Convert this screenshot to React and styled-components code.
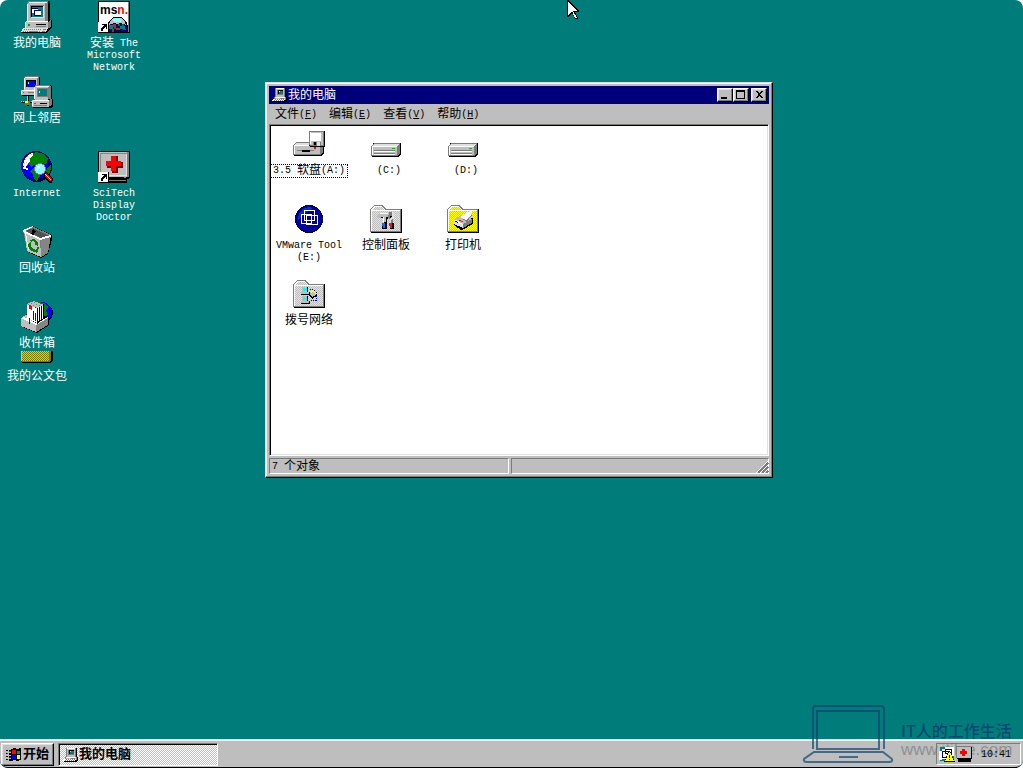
import React from "react";
import styled, { createGlobalStyle, css } from "styled-components";

const c = {
  teal: "#007d7b",
  face: "#bdbebd",
  light: "#dedfde",
  shade: "#7b7d7b",
  navy: "#00007b",
};

const Global = createGlobalStyle`
  *, *::before, *::after { box-sizing: border-box; }
  html, body { margin: 0; height: 100%; background: #fff; }
  #root { height: 100%; }
  body, button {
    font-family: "Liberation Mono", "Noto Sans CJK SC", monospace;
    font-size: 12px;
    line-height: 12px;
    color: #000;
  }
  button { margin: 0; padding: 0; border: 0; background: none; text-align: center; }
`;

const raised = css`
  border: 1px solid;
  border-color: #fff #000 #000 #fff;
  box-shadow: inset -1px -1px ${c.shade}, inset 1px 1px ${c.light};
`;

/* ---------- text ---------- */

const Latin = styled.span`
  font-size: 10px;
  line-height: 0;
  vertical-align: 1px;
  white-space: pre;
`;

/* Latin runs are set smaller, so that one letter is half an ideograph wide. */
function Mixed({ children }) {
  return children
    .split(/([\x20-\x7e]+)/)
    .filter(Boolean)
    .map((run, i) => (/[\x20-\x7e]/.test(run) ? <Latin key={i}>{run}</Latin> : run));
}

/* ---------- icons ---------- */

const Svg = styled.svg`
  display: block;
  flex: none;
  overflow: visible;
`;

function Pixels({ w = 32, h = 32, shapes, children }) {
  return (
    <Svg width={w} height={h} viewBox={`0 0 ${w} ${h}`} shapeRendering="crispEdges" aria-hidden="true">
      {shapes && shapes.map(([fill, d], i) => <path key={i} fill={fill} d={d} />)}
      {children}
    </Svg>
  );
}

const Computer = () => (
  <Pixels
    shapes={[
      ["#000", "M8 0h20l1 1v19l-2 2H7V2z"],
      [c.shade, "M7 0h20v20H6V2z"],
      [c.face, "M8 1h16v20H6V3z"],
      ["#fff", "M8 1h18v1H8zM6 3h1v17H6z"],
      [c.face, "M8 3h16v16H8z"],
      [c.shade, "M9 4h14v1H9zM9 4h1v13H9z"],
      ["#000", "M10 5h12v1H10zM10 5h1v11h-1z"],
      [c.light, "M22 5h1v12H10v-1h12z"],
      [c.teal, "M11 6h11v10H11z"],
      ["#fff", "M11 8h6v4h-6z"],
      [c.navy, "M11 7h6v1h-6zM13 9h7v6h-7z"],
      ["#fff", "M14 10h6v4h-6z"],
      ["#000", "M5 20h24l2-1v8l-3 2H5z"],
      [c.shade, "M27 21l3-2v7l-3 2z"],
      [c.face, "M4 21h23v7H4z"],
      ["#fff", "M5 20h22v1H5zM4 21h1v6H4z"],
      ["#00a200", "M7 23h2v2H7z"],
      ["#000", "M15 23h10v1H15z"],
      [c.shade, "M15 25h10v1H15z"],
      ["#000", "M2 27h26l1 1-3 4H0v-1z"],
      [c.light, "M2 27h25l-2 4H0z"],
      [c.shade, "M3 28h1v1H3zM5 28h1v1H5zM7 28h1v1H7zM9 28h1v1H9zM11 28h1v1h-1zM13 28h1v1h-1zM15 28h1v1h-1zM17 28h1v1h-1zM19 28h1v1h-1zM22 28h3v1h-3zM2 30h1v1H2zM4 30h1v1H4zM6 30h1v1H6zM8 30h9v1H8zM18 30h1v1h-1zM21 30h3v1h-3z"],
    ]}
  />
);

const Network = () => (
  <Pixels
    shapes={[
      ["#000", "M4 0h13l2 1v14H3V1z"],
      [c.shade, "M4 0h13l1 1v13H3V1z"],
      [c.face, "M4 1h12v13H3V2z"],
      ["#fff", "M4 1h13v1H4zM3 2h1v11H3z"],
      ["#000", "M5 4h10v7H5z"],
      ["#0000ff", "M6 5h8v6H6z"],
      ["#84ffff", "M7 6h1v2H7z"],
      ["#000", "M1 14h18v6H1z"],
      [c.face, "M0 14h16v5H0z"],
      ["#fff", "M1 14h16v1H1zM0 15h1v3H0z"],
      ["#00a200", "M2 16h1v1H2z"],
      [c.shade, "M7 16h7v1H7z"],
      ["#000", "M6 20h2v5H6zM0 26h4v1H0zM9 26h3v1H9zM6 28h2v2H6z"],
      [c.face, "M6 20h1v5H6zM0 25h1v1H0zM2 25h1v1H2zM10 25h1v1h-1z"],
      ["#7b7d00", "M4 25h5v4H4z"],
      ["#ffff00", "M4 25h3v2H4z"],
      ["#000", "M15 9h14l2 1v14H14V10z"],
      [c.shade, "M14 9h14l2 1v13H14z"],
      [c.face, "M14 10h13v14H14z"],
      ["#fff", "M15 10h13v1H15zM13 11h1v12h-1z"],
      [c.shade, "M16 12h11v9H16z"],
      [c.teal, "M17 13h9v7h-9z"],
      ["#84ffff", "M18 15h1v2h-1z"],
      ["#000", "M12 24h18l2-1v7l-2 2H12z"],
      [c.shade, "M27 24l4-1v6l-4 2z"],
      [c.face, "M11 24h17v7H11z"],
      ["#fff", "M12 24h16v1H12zM11 25h1v5h-1z"],
      ["#00a200", "M13 27h2v1h-2z"],
      ["#000", "M19 27h7v1h-7z"],
      [c.shade, "M13 29h13v1H13z"],
    ]}
  />
);

const Internet = () => (
  <Pixels>
    <circle cx="16" cy="16" r="15" fill="#000" />
    <circle cx="15" cy="15" r="15" fill={c.navy} />
    <circle cx="14" cy="15" r="13" fill="#0000ff" />
    <path fill="#008200" d="M10 4l5-3 8 2 4 5-2 5-5-1-3 4-4-2-3 2-3-4zM12 17l5 2 3 4-4 7-3-2-1-4-3-4zM26 17l4-3v4l-2 5-3-2z" />
    <path fill="#fff" d="M4 8l4-5 4-1v2L9 7v3l-3 5-3 1-1-2zM2 16h3v2H2zM5 17h2v2H5z" />
    <path fill={c.face} d="M8 3h1v1H8zM10 3h1v1h-1zM6 5h1v1H6zM8 7h1v1H8zM4 8h1v1H4zM5 11h1v1H5zM3 12h1v1H3zM6 13h1v1H6z" />
    <path fill="#000" d="M23 22l3-1 6 7-1 4h-3l-5-6z" />
    <path fill="#ff0000" d="M24 23l2-1 5 6-2 3-5-6z" />
    <path fill="#fff" d="M24 23h1l5 6h-1z" />
    <circle cx="19" cy="18" r="6" fill={c.shade} />
    <circle cx="19" cy="18" r="5" fill="#84ffff" />
    <path fill="#fff" d="M16 15h3v2h-2v3h-1zM20 20h2v1h-2zM19 14h1v1h-1zM21 17h1v1h-1z" />
  </Pixels>
);

const RecycleBin = () => (
  <Pixels
    shapes={[
      ["#000", "M12 0l19 9v4l-4 15-7 4-13-6L3 5z"],
      [c.shade, "M11 0l19 9-3 18-7 4L6 25 2 4z"],
      ["#525152", "M5 5l7-3 16 8-8 2z"],
      ["#000", "M12 3l3 2-3 5-2-2z"],
      [c.face, "M3 5l16 8 1 18L6 25z"],
      ["#848684", "M20 13l10-3-4 17-6 4z"],
      ["#fff", "M2 4l10-4v1L4 5l15 7 11-3v2l-11 3L2 6zM4 7h1l3 17H7z"],
      ["#008200", "M9 14l4-1 3 3 1-1v5l-4-2 1-1-2-2-2 1zM7 18l3-2v4l2 3-1 2-3-2zM12 23l3 1 2-4 1 2-2 5-3-1v1l-2-3z"],
    ]}
  />
);

const Inbox = () => (
  <Pixels>
    <circle cx="22" cy="12" r="10" fill="#000" />
    <circle cx="21" cy="11" r="10" fill="#0000ff" />
    <path fill="#008200" d="M17 1l6 1 4 4-2 4 2 4-4 1-3-6z" />
    <path fill="#000" d="M0 17l6-4 22 3v8l-12 8-3-1L0 25z" />
    <path fill={c.face} d="M0 17l5-3 10 9v8L0 25z" />
    <path fill="#848684" d="M15 24l12-7v7l-12 7z" />
    <path fill="#fff" d="M0 17l15 7 12-7v-1l-12 6L3 16z" />
    <path fill="#000" d="M15 6l8-3v15l-7 5z" />
    <path fill={c.face} d="M5 4l5-3 3-1 10 4-6 3z" />
    <path fill="#fff" d="M6 4l10 3v15l-8-4-2 3zM17 6h1v14h-1zM19 5h1v14h-1zM21 5h1v13h-1z" />
    <path fill={c.shade} d="M7 3h1v1H7zM10 2h1v1h-1zM13 1h1v1h-1zM12 4h1v1h-1zM15 3h1v1h-1zM18 4h1v1h-1z" />
    <path fill="#ff0000" d="M8 4l3 1v4l-3-1z" />
    <path fill="#0000ff" d="M12 10h1v9h-1zM14 12h1v8h-1zM8 17h1v6H8z" />
  </Pixels>
);

const Briefcase = () => (
  <Pixels h={15}>
    <defs>
      <pattern id="gold" width="2" height="2" patternUnits="userSpaceOnUse">
        <rect width="2" height="2" fill="#7b7d00" />
        <path fill={c.face} d="M1 0h1v1H1zM0 1h1v1H0z" />
      </pattern>
    </defs>
    <path fill="#000" d="M0 0h32v9l-3 3H1z" />
    <path fill="#7b7d00" d="M0 0h30v9l-2 2H1z" />
    <path fill="url(#gold)" d="M1 0h27v10H1z" />
    <path fill="#cecf63" d="M0 0h1v10H0z" />
  </Pixels>
);

const ShortcutMark = () => (
  <>
    <path fill="#000" d="M0 21h11v11H0z" />
    <path fill="#fff" d="M0 21h10v10H0z" />
    <path fill="#000" d="M4 23h5v5H8v-2H7v1H6v1H5v2H3v-3h1v-1h1v-1h1v-1H4z" />
  </>
);

const MsnText = styled.text`
  font: bold 12px/12px "Liberation Sans", sans-serif;
`;

const Msn = () => (
  <Pixels>
    <path fill="#000" d="M0 0h32v32H0z" />
    <path fill={c.shade} d="M30 1h1v30h-1z" />
    <path fill="#fff" d="M1 1h29v30H1z" />
    <MsnText x="2" y="13">
      ms<tspan fill="#ff0000">n.</tspan>
    </MsnText>
    <path fill="#000" d="M8 31v-5l3-6 5-4h7l5 4 2 5v6z" />
    <path fill={c.navy} d="M9 31v-5l3-5 4-4h7l4 4 2 4v6z" />
    <path fill={c.face} d="M12 20l4-3h7l4 4 1 3-5-2-4 1-3-1-5 2z" />
    <path fill="#84ffff" d="M14 18l3-1h4l3 2-2 2h-6z" />
    <path fill="#008284" d="M11 24h4v4h-4zM22 25h5v3h-5z" />
    <path fill="#c62010" d="M15 23h3v3h-3zM18 27h4v2h-4zM14 28h2v3h-2zM25 28h3v1h-3z" />
    <path fill="#008200" d="M16 26h2v2h-2zM20 23h2v2h-2zM24 23h2v2h-2z" />
    <ShortcutMark />
  </Pixels>
);

const SciTech = () => (
  <Pixels>
    <path fill="#000" d="M0 0h32v26l-2 2H0z" />
    <path fill={c.shade} d="M1 1h30v24l-2 2H1z" />
    <path fill={c.face} d="M1 1h28v25H1z" />
    <path fill="#848684" d="M2 2h27v1H3v22H2z" />
    <path fill={c.light} d="M28 3h1v22H3v-1h25z" />
    <path fill="#7b0000" d="M14 5h6v6h5v6h-5v5h-6v-5H9v-6h5z" />
    <path fill="#ff0000" d="M13 5h5v5h5v5h-5v5h-5v-5H8v-5h5z" />
    <path fill="#000" d="M8 26h23v1H8zM11 28h18v4H11z" />
    <path fill="#00ff00" d="M26 26h2v1h-2z" />
    <path fill={c.shade} d="M11 29h17v1H11z" />
    <ShortcutMark />
  </Pixels>
);

const Floppy = () => (
  <Pixels
    shapes={[
      ["#000", "M3 14h28v11l-3 3H1V18z"],
      [c.shade, "M0 17l3-3h27v10l-3 3H0z"],
      [c.light, "M1 17l3-2h24l-2 3H1z"],
      [c.face, "M1 18h26v8H1z"],
      ["#fff", "M1 17h25v1H1zM1 18h1v8H1z"],
      ["#000", "M9 22h8v2H9z"],
      [c.shade, "M4 22h5v1H4zM17 22h4v1h-4z"],
      ["#000", "M17 3h15v16H18l-2-1V4z"],
      [c.shade, "M16 3h15v15H17l-1-1z"],
      [c.face, "M17 4h13v13H17z"],
      ["#fff", "M18 5h10v8H18zM17 4h1v12h-1z"],
      [c.shade, "M20 14h8v4h-8z"],
      ["#000", "M21 14h2v3h-2z"],
      [c.light, "M24 14h3v4h-3z"],
      ["#ff0000", "M21 19h2v2h-2z"],
    ]}
  />
);

const HardDisk = () => (
  <Pixels
    shapes={[
      ["#000", "M3 15h28v11l-3 3H2z"],
      [c.shade, "M1 18l3-3h26v10l-3 3H1z"],
      [c.light, "M2 18l3-2h24l-2 2z"],
      [c.face, "M2 18h25v9H2z"],
      ["#fff", "M2 18h25v1H2zM2 19h1v8H2z"],
      [c.shade, "M4 22h21v1H4zM4 25h21v1H4z"],
      ["#fff", "M4 23h21v1H4zM4 26h21v1H4z"],
      ["#00c300", "M22 20h3v1h-3z"],
    ]}
  />
);

const VmwareDisc = () => (
  <Pixels>
    <circle cx="16" cy="16" r="14" fill="#000042" />
    <circle cx="16" cy="16" r="13" fill="#00009c" />
    <path fill="#0030ce" d="M6 10l5-5 5-1 4 1-6 4-6 5-3 3z" />
    <g fill="none" stroke="#fff">
      <path d="M8.500 11.500h10v9h-10zM11.500 7.500h10v10h-10zM13.500 12.500h11v9h-11z" />
    </g>
  </Pixels>
);

function Folder({ children }) {
  return (
    <Pixels>
      <defs>
        <pattern id="folder" width="2" height="2" patternUnits="userSpaceOnUse">
          <rect width="2" height="2" fill={c.face} />
          <path fill="#ffff00" d="M0 0h1v1H0zM1 1h1v1H1z" />
        </pattern>
      </defs>
      <path fill="#000" d="M1 6h31v24H1z" />
      <path fill={c.shade} d="M0 6l4-4h9l3 4h15v23H0z" />
      <path fill="#fff" d="M1 7l3-4h8l3 4h15v21H1z" />
      <path fill="url(#folder)" d="M3 6l2-2h7l2 3H3zM2 8h28v20H2z" />
      {children}
    </Pixels>
  );
}

const ControlPanel = () => (
  <Folder>
    <path fill="#000" d="M7 14l4-3h10l1 3-5 2v4h-3v-5H8z" />
    <path fill={c.face} d="M6 13l5-3h9v3l-4 1v5h-3v-5l-5 1z" />
    <path fill="#fff" d="M10 10h8v1h-8zM13 14h1v5h-1z" />
    <path fill={c.shade} d="M19 9h3v4h-2v3h3v8h-3v-7l-2-2z" />
    <path fill={c.light} d="M22 8l2 2v5l-3 2v4h-1v-6h2z" />
    <path fill="#000" d="M12 20h5v6h-5zM20 20h4v6h-4z" />
    <path fill="#0071ff" d="M12 20h3v5h-2z" />
    <path fill="#ff0042" d="M19 20h3v5h-2z" />
  </Folder>
);

const Printers = () => (
  <Folder>
    <path fill="#000" d="M7 18l7-5 12 2v6l-9 5-3 1-7-5z" />
    <path fill={c.face} d="M7 17l7-5 11 4-9 5z" />
    <path fill={c.shade} d="M16 21l9-5v4l-9 5z" />
    <path fill={c.light} d="M7 18l9 4v3l-9-4z" />
    <path fill="#fff" d="M13 14l7-5 5-1-1 4-5 5zM7 17h2l7 4v1z" />
    <path fill={c.shade} d="M14 15l5 2 5-5h1l-5 7z" />
    <path fill="#ff0000" d="M12 17h2v1h-2z" />
    <path fill="#00a200" d="M14 18h2v1h-2z" />
  </Folder>
);

const DialUp = () => (
  <Folder>
    {[9, 18].map((y) => (
      <g key={y} transform={`translate(8 ${y})`}>
        <path fill="#000" d="M1 0h6v5h2v3H0V6h1z" />
        <path fill={c.face} d="M1 0h5v5H1zM0 5h8v2H0z" />
        <path fill="#00ffff" d="M2 1h4v3H2z" />
      </g>
    ))}
    <path fill="none" stroke="#0000ff" strokeDasharray="1 1" d="M17 11.500h4v3M17.500 22.500h6v-5" />
    <path fill="#000" d="M16 17l4-4 4 1v4l-5 3z" />
    <path fill={c.face} d="M16 16l4-2 3 3-4 2z" />
    <path fill="#ffff00" d="M18 12l4 1 2 3h-2l-2-2-2 1z" />
  </Folder>
);

const SmallComputer = () => (
  <Pixels
    w={16}
    h={16}
    shapes={[
      ["#000", "M4 1h10v9h1v4l-2 1H1v-1l1-3h2z"],
      [c.shade, "M3 1h10v9H3zM2 10h12v3H2z"],
      [c.face, "M4 1h8v9H4z"],
      ["#fff", "M4 1h8v1H4z"],
      [c.shade, "M5 3h6v5H5z"],
      ["#000", "M6 3h5v1H6zM6 3h1v4H6z"],
      [c.teal, "M7 4h4v3H7z"],
      ["#84ffff", "M7 4h1v1H7z"],
      [c.face, "M3 10h10v2H3z"],
      ["#fff", "M3 10h10v1H3zM1 12h12l-1 2H0z"],
      [c.shade, "M8 11h4v1H8zM3 12h1v1H3zM5 12h1v1H5zM7 12h1v1H7zM9 12h1v1H9zM11 12h1v1h-1zM2 13h1v1H2zM4 13h1v1H4zM6 13h1v1H6zM8 13h1v1H8zM10 13h1v1h-1z"],
    ]}
  />
);

const Flag = () => (
  <Pixels
    w={16}
    h={16}
    shapes={[
      ["#000", "M5 2l3-1 3 1 4-1v12l-4 1-3-1-3 1zM0 3h2v1H0zM3 3h2v2H3zM0 6h2v1H0zM3 6h2v2H3zM0 9h2v1H0zM3 9h2v2H3zM0 12h2v1H0zM3 12h2v2H3z"],
      ["#ff0000", "M6 3h4v4H6zM3 4h2v1H3zM1 6h1v1H1z"],
      ["#00a200", "M11 4h3v3h-3z"],
      ["#0000ff", "M6 8h4v4H6zM3 10h2v1H3zM1 12h1v1H1z"],
      ["#ffff00", "M11 8h3v4h-3z"],
    ]}
  />
);

const TrayVmware = () => (
  <Pixels
    w={16}
    h={16}
    shapes={[
      [c.teal, "M1 1h14v14H1z"],
      ["#fff", "M3 3h3V1h9v9h-2v3H3v1H0V5h3z"],
      [c.navy, "M3 5h7v1H4v5h6v1H3zM6 3h7v7h-1V4H7v3h4v1H6z"],
      ["#000", "M10 5h1l5 11H5z"],
      ["#ffff00", "M10 6h1l4 9H6z"],
      ["#000", "M10 9h1v3h-1zM10 13h1v1h-1z"],
    ]}
  />
);

const TrayDoctor = () => (
  <Pixels
    w={16}
    h={16}
    shapes={[
      ["#000", "M1 1h15v12h-1v3H2v-3H1z"],
      [c.face, "M0 0h15v12H0z"],
      [c.shade, "M0 0h15v1H1v11H0z"],
      ["#ff0000", "M6 3h3v2h2v3H9v2H6V8H4V5h2z"],
    ]}
  />
);

const ButtonGlyph = ({ d }) => (
  <Pixels w={12} h={10}>
    <path d={d} fill="#000" />
  </Pixels>
);

/* ---------- desktop ---------- */

const Screen = styled.main`
  position: relative;
  display: flex;
  flex-direction: column;
  min-height: 100%;
  overflow: hidden;
  border-bottom: 1px solid #000;
  border-radius: 8px;
  background: ${c.teal};
`;

const Desktop = styled.section`
  flex: 1;
  display: grid;
  grid-template-columns: 74px 74px;
  grid-template-rows: repeat(4, 75px) 50px auto;
  column-gap: 3px;
  align-items: start;
  align-content: start;
  padding-top: 1px;
`;

const Shortcut = styled.button`
  grid-column: ${(p) => p.$col};
  grid-row: ${(p) => p.$row};
  display: flex;
  flex-direction: column;
  align-items: center;
  gap: 5px;
  color: ${(p) => (p.$dark ? "#000" : "#fff")};
`;

const Caption = styled.span`
  width: 100%;
  white-space: nowrap;
  outline: ${(p) => (p.$focused ? "1px dotted #000" : "none")};
`;

const shortcuts = [
  { name: ["我的电脑"], Icon: Computer, col: 1, row: 1 },
  { name: ["网上邻居"], Icon: Network, col: 1, row: 2 },
  { name: ["Internet"], Icon: Internet, col: 1, row: 3 },
  { name: ["回收站"], Icon: RecycleBin, col: 1, row: 4 },
  { name: ["收件箱"], Icon: Inbox, col: 1, row: 5 },
  { name: ["我的公文包"], Icon: Briefcase, col: 1, row: 6 },
  { name: ["安装 The", "Microsoft", "Network"], Icon: Msn, col: 2, row: 1 },
  { name: ["SciTech", "Display", "Doctor"], Icon: SciTech, col: 2, row: 3 },
];

const drives = [
  { name: ["3.5 软盘(A:)"], Icon: Floppy, focused: true },
  { name: [" (C:)"], Icon: HardDisk },
  { name: [" (D:)"], Icon: HardDisk },
  { name: ["VMware Tool", "(E:)"], Icon: VmwareDisc },
  { name: ["控制面板"], Icon: ControlPanel },
  { name: ["打印机"], Icon: Printers },
  { name: ["拨号网络"], Icon: DialUp },
];

function Lines({ of }) {
  return of.map((line, i) => (
    <React.Fragment key={line}>
      {i > 0 && <br />}
      <Mixed>{line}</Mixed>
    </React.Fragment>
  ));
}

/* ---------- window ---------- */

const Window = styled.article`
  position: absolute;
  left: 265px;
  top: 82px;
  width: 508px;
  height: 396px;
  display: flex;
  flex-direction: column;
  padding: 3px;
  background: ${c.face};
  border: 1px solid;
  border-color: ${c.light} #000 #000 ${c.light};
  box-shadow: inset -1px -1px ${c.shade}, inset 1px 1px #fff;
`;

const TitleBar = styled.header`
  flex: none;
  display: flex;
  align-items: center;
  height: 18px;
  padding: 0 2px 0 3px;
  background: ${c.navy};
  color: #fff;
`;

const Title = styled.h1`
  flex: 1;
  margin: 0;
  padding-top: 2px;
  font-size: 12px;
  font-weight: normal;
  line-height: 12px;
`;

const CaptionButton = styled.button`
  ${raised}
  display: flex;
  align-items: center;
  justify-content: center;
  width: 16px;
  height: 14px;
  background: ${c.face};
  margin-left: ${(p) => (p.$apart ? "2px" : "0")};
`;

const MenuBar = styled.nav`
  flex: none;
  display: flex;
  height: 20px;
`;

const MenuItem = styled.button`
  padding: 2px 6px 0;
  white-space: nowrap;
`;

const Contents = styled.div`
  flex: 1;
  display: grid;
  grid-template-columns: repeat(3, 76px);
  grid-auto-rows: 75px;
  column-gap: 1px;
  align-content: start;
  align-items: start;
  padding: 3px 1px 1px;
  background: #fff;
  border: 1px solid;
  border-color: ${c.shade} #fff #fff ${c.shade};
  box-shadow: inset 1px 1px #000, inset -1px -1px ${c.light};
`;

const StatusBar = styled.footer`
  flex: none;
  display: flex;
  gap: 2px;
  height: 18px;
  padding-top: 2px;
`;

const StatusPane = styled.div`
  display: flex;
  align-items: center;
  flex: 0 0 240px;
  padding: 2px 0 0 2px;
  border: 1px solid;
  border-color: ${c.shade} #fff #fff ${c.shade};
`;

const GripPane = styled(StatusPane)`
  flex: 1;
  justify-content: flex-end;
`;

const Grip = () => (
  <Pixels w={12} h={12}>
    <path stroke={c.shade} strokeWidth="2" d="M2 12L12 2M6 12l6-6M10 12l2-2" />
    <path stroke="#fff" d="M0 12L12 0M4 12l8-8M8 12l4-4" />
  </Pixels>
);

const menus = [
  ["文件", "F"],
  ["编辑", "E"],
  ["查看", "V"],
  ["帮助", "H"],
];

/* ---------- taskbar ---------- */

const TaskBar = styled.footer`
  flex: none;
  display: flex;
  align-items: center;
  gap: 4px;
  height: 28px;
  padding: 1px 2px 0 1px;
  background: ${c.face};
  border-top: 1px solid ${c.light};
  box-shadow: inset 0 1px #fff;
`;

const TaskButton = styled.button`
  display: flex;
  align-items: center;
  height: 23px;
  padding: 2px 4px 0;
  font-size: 13px;
  font-weight: bold;
  white-space: nowrap;
  ${raised}
  gap: ${(p) => (p.$pressed ? "0" : "1px")};
  width: ${(p) => (p.$pressed ? "160px" : "auto")};
  background: ${c.face};
  ${(p) =>
    p.$pressed &&
    css`
      border-color: ${c.shade} #fff #fff ${c.shade};
      box-shadow: inset 1px 1px #000;
      background: conic-gradient(#fff 25%, ${c.face} 0 50%, #fff 0 75%, ${c.face} 0) 0 0 / 2px 2px;
    `}
`;

const Tray = styled.div`
  display: flex;
  align-items: center;
  height: 22px;
  margin-left: auto;
  padding: 0 9px 0 2px;
  border: 1px solid;
  border-color: ${c.shade} #fff #fff ${c.shade};
`;

const TrayItems = styled.div`
  position: relative;
  z-index: 1;
  display: flex;
  align-items: center;
  gap: 1px;
`;

const Clock = styled.time`
  margin-left: 8px;
  padding-top: 2px;
`;

/* ---------- overlays ---------- */

const Watermark = styled.aside`
  position: absolute;
  right: 9px;
  bottom: 3px;
  display: flex;
  align-items: flex-end;
  gap: 7px;
  pointer-events: none;
  font: 16px/20px "Liberation Sans", "Noto Sans CJK SC", sans-serif;
`;

const WatermarkText = styled.div`
  width: 113px;
  padding-bottom: 4px;
  white-space: nowrap;
`;

const Slogan = styled.div`
  color: rgba(0, 55, 107, 0.75);
  font-family: "Noto Sans CJK SC", sans-serif;
  font-weight: 500;
`;

const Site = styled.div`
  color: rgba(110, 112, 116, 0.6);
  font-size: 17px;
`;

const Pointer = styled.div`
  position: absolute;
  left: 567px;
  top: 0;
  pointer-events: none;
`;

export default function App() {
  return (
    <>
      <Global />
      <Screen>
        <Desktop>
          {shortcuts.map(({ name, Icon, col, row }) => (
            <Shortcut key={name[0]} $col={col} $row={row}>
              <Icon />
              <Caption>
                <Lines of={name} />
              </Caption>
            </Shortcut>
          ))}
        </Desktop>

        <Window>
          <TitleBar>
            <SmallComputer />
            <Title>我的电脑</Title>
            <CaptionButton aria-label="最小化">
              <ButtonGlyph d="M2 7h6v2H2z" />
            </CaptionButton>
            <CaptionButton aria-label="最大化">
              <ButtonGlyph d="M1 0h9v9H1zM2 2v6h7V2z" />
            </CaptionButton>
            <CaptionButton aria-label="关闭" $apart>
              <ButtonGlyph d="M2 1h2l2 2 2-2h2L7 4v1l3 3H8L6 6 4 8H2l3-3V4z" />
            </CaptionButton>
          </TitleBar>
          <MenuBar>
            {menus.map(([label, key]) => (
              <MenuItem key={key}>
                {label}
                <Latin>
                  (<u>{key}</u>)
                </Latin>
              </MenuItem>
            ))}
          </MenuBar>
          <Contents>
            {drives.map(({ name, Icon, focused }) => (
              <Shortcut key={name[0]} $dark>
                <Icon />
                <Caption $focused={focused}>
                  <Lines of={name} />
                </Caption>
              </Shortcut>
            ))}
          </Contents>
          <StatusBar>
            <StatusPane>
              <span>
                <Mixed>7 个对象</Mixed>
              </span>
            </StatusPane>
            <GripPane>
              <Grip />
            </GripPane>
          </StatusBar>
        </Window>

        <TaskBar>
          <TaskButton>
            <Flag />
            开始
          </TaskButton>
          <TaskButton $pressed>
            <SmallComputer />
            我的电脑
          </TaskButton>
          <Tray>
            <TrayItems>
              <TrayVmware />
              <TrayDoctor />
              <Clock>
                <Latin>10:41</Latin>
              </Clock>
            </TrayItems>
          </Tray>
        </TaskBar>

        <Watermark>
          <Svg width="92" height="60" viewBox="0 0 92 60" fill="none" stroke="#003c6b" strokeOpacity="0.65" strokeWidth="2" aria-hidden="true">
            <path d="M11 45V5q0-3 3-3h65q3 0 3 3v40" />
            <path d="M15 45V7h62v38z" />
            <path d="M12 48h69l9 7q1 3-3 3H5q-4 0-3-3z" />
            <path d="M37 53h19" />
          </Svg>
          <WatermarkText>
            <Slogan>IT人的工作生活</Slogan>
            <Site>www.itilse.com</Site>
          </WatermarkText>
        </Watermark>

        <Pointer>
          <Pixels
            w={12}
            h={19}
            shapes={[
              ["#000", "M0 0h1l11 11v1H8l3 6-1 1H8l-3-6-4 4H0z"],
              ["#fff", "M1 2l9 9H6l4 7H8l-3-7-4 4z"],
            ]}
          />
        </Pointer>
      </Screen>
    </>
  );
}
